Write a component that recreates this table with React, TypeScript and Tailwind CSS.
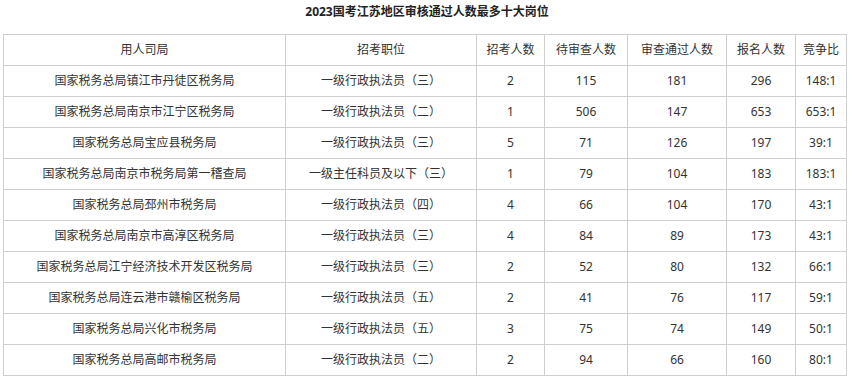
const headers = ['用人司局', '招考职位', '招考人数', '待审查人数', '审查通过人数', '报名人数', '竞争比'];

const widths = ['w-[282px]', 'w-[191px]', 'w-[68px]', 'w-[83px]', 'w-[99px]', 'w-[69px]', 'w-[51px]'];

const rows: string[][] = [
  ['国家税务总局镇江市丹徒区税务局', '一级行政执法员（三）', '2', '115', '181', '296', '148:1'],
  ['国家税务总局南京市江宁区税务局', '一级行政执法员（二）', '1', '506', '147', '653', '653:1'],
  ['国家税务总局宝应县税务局', '一级行政执法员（三）', '5', '71', '126', '197', '39:1'],
  ['国家税务总局南京市税务局第一稽查局', '一级主任科员及以下（三）', '1', '79', '104', '183', '183:1'],
  ['国家税务总局邳州市税务局', '一级行政执法员（四）', '4', '66', '104', '170', '43:1'],
  ['国家税务总局南京市高淳区税务局', '一级行政执法员（三）', '4', '84', '89', '173', '43:1'],
  ['国家税务总局江宁经济技术开发区税务局', '一级行政执法员（三）', '2', '52', '80', '132', '66:1'],
  ['国家税务总局连云港市赣榆区税务局', '一级行政执法员（五）', '2', '41', '76', '117', '59:1'],
  ['国家税务总局兴化市税务局', '一级行政执法员（五）', '3', '75', '74', '149', '50:1'],
  ['国家税务总局高邮市税务局', '一级行政执法员（二）', '2', '94', '66', '160', '80:1'],
];

const App = () => {
  return (
    <div className="h-[379px] w-[852px] bg-white font-['Noto_Sans','Noto_Sans_CJK_SC',sans-serif] text-[12px] text-[#333]">
      <h2 className="flex h-[24px] items-center justify-center pl-[2px] text-[12px] font-bold text-[#222]">
        2023国考江苏地区审核通过人数最多十大岗位
      </h2>
      <div className="pt-[10px] pl-[3px]">
        <table className="w-[843px] table-fixed border-collapse">
          <colgroup>
            {widths.map((w) => (
              <col key={w} className={w} />
            ))}
          </colgroup>
          <thead>
            <tr>
              {headers.map((h) => (
                <td key={h} className="h-[31px] border border-[#cfcfcf] p-0 text-center font-normal leading-none">
                  {h}
                </td>
              ))}
            </tr>
          </thead>
          <tbody>
            {rows.map((row) => (
              <tr key={row[0]}>
                {row.map((cell, i) => (
                  <td key={i} className="h-[31px] border border-[#cfcfcf] p-0 text-center leading-none">
                    {cell}
                  </td>
                ))}
              </tr>
            ))}
          </tbody>
        </table>
      </div>
    </div>
  );
};

export default App;
